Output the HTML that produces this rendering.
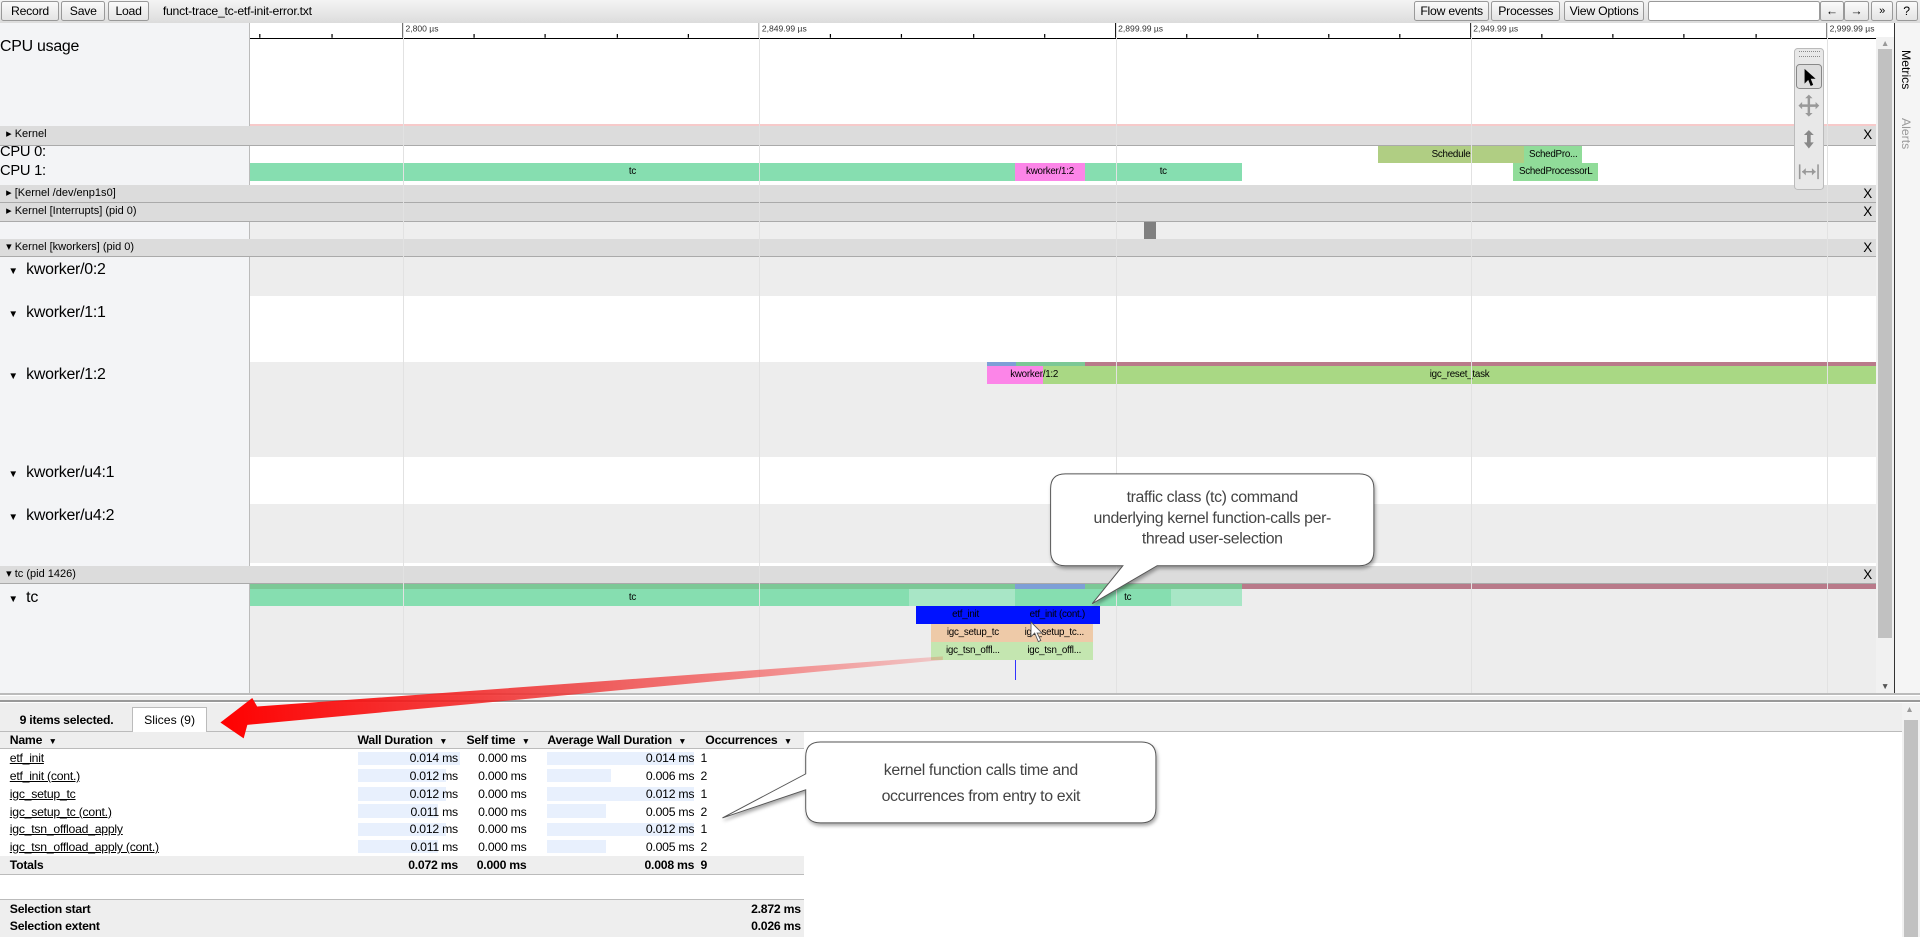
<!DOCTYPE html>
<html><head><meta charset="utf-8"><style>
html,body{margin:0;padding:0;width:1920px;height:937px;overflow:hidden;background:#fff}
#w{zoom:1.22449;width:1568px;height:765px;position:relative;overflow:hidden;font-family:"Liberation Sans",sans-serif;color:#000}
.a{position:absolute}
.btn{position:absolute;top:1px;height:16px;border:1px solid #999;border-radius:2px;background:linear-gradient(#fafafa,#e4e4e4);font-size:10px;letter-spacing:-0.2px;white-space:nowrap;overflow:hidden;line-height:15px;text-align:center;box-sizing:border-box}
.hdr{position:absolute;left:0;width:1532px;background:#dcdcdc;border-bottom:1px solid #aaa;font-size:9px;line-height:14px;box-sizing:border-box}
.hdr span.x{position:absolute;right:3px;top:0;font-size:11px}
.lbl{position:absolute;left:0;width:203px;font-size:13px;letter-spacing:-0.2px}
.bar{position:absolute;font-size:8px;text-align:center;overflow:hidden;white-space:nowrap;line-height:14px;letter-spacing:-0.2px}
.vl{position:absolute;top:19px;width:1px;background:#e2e2e2;height:547px}
td,th{padding:0;font-size:10px;height:14.5px;white-space:nowrap;letter-spacing:-0.2px}
</style></head><body><div id="w">
<div class="a" style="left:0;top:0;width:1568px;height:19px;background:linear-gradient(#f4f4f4,#dcdcdc)"></div>
<div class="btn" style="left:1px;width:47px">Record</div>
<div class="btn" style="left:50px;width:36px">Save</div>
<div class="btn" style="left:88px;width:34px">Load</div>
<div class="a" style="left:133px;top:3px;font-size:10px;letter-spacing:-0.2px">funct-trace_tc-etf-init-error.txt</div>
<div class="btn" style="left:1155px;width:61px">Flow events</div>
<div class="btn" style="left:1218px;width:56px">Processes</div>
<div class="btn" style="left:1277px;width:66px">View Options</div>
<div class="btn" style="left:1346px;width:140px;background:#fff"></div>
<div class="btn" style="left:1486px;width:20px">&larr;</div>
<div class="btn" style="left:1506px;width:20px">&rarr;</div>
<div class="btn" style="left:1528px;width:18px;font-size:9px">»</div>
<div class="btn" style="left:1548px;width:18px">?</div>
<div class="a" style="left:0;top:19px;width:203px;height:548px;background:#f3f4f6;border-right:1px solid #bbb"></div>
<div class="a" style="left:204px;top:19px;width:1328px;height:12px;background:#fff;border-bottom:1px solid #000"></div>
<svg class="a" style="left:204px;top:19px" width="1328" height="12">
<g stroke="#000" stroke-width="1">
<path d="M125 0V12M416 0V12M707 0V12M997 0V12M1288 0V12"/>
<path d="M8 9V12M67 9V12M183 9V12M241 9V12M300 9V12M358 9V12M474 9V12M532 9V12M591 9V12M649 9V12M765 9V12M823 9V12M881 9V12M939 9V12M1055 9V12M1113 9V12M1171 9V12M1230 9V12"/></g>
<g font-size="7" fill="#333" font-family="Liberation Sans"><text x="127" y="7">2,800 µs</text><text x="418" y="7">2,849.99 µs</text><text x="709" y="7">2,899.99 µs</text><text x="999" y="7">2,949.99 µs</text><text x="1290" y="7">2,999.99 µs</text></g></svg>
<div class="lbl" style="top:31px;font-size:13px">CPU usage</div>
<div class="a" style="left:204px;top:101px;width:1328px;height:2px;background:#f7caca"></div>
<div class="hdr" style="top:103px;height:16px">&nbsp;&nbsp;▸ Kernel<span class="x">X</span></div>
<div class="lbl" style="top:118px;font-size:12px">CPU 0:</div>
<div class="lbl" style="top:133px;font-size:12px">CPU 1:</div>
<div class="bar" style="left:204px;top:133px;width:625px;height:15px;background:#86deb0">tc</div>
<div class="bar" style="left:829px;top:133px;width:57px;height:15px;background:#fc85e8">kworker/1:2</div>
<div class="bar" style="left:886px;top:133px;width:128px;height:15px;background:#86deb0">tc</div>
<div class="bar" style="left:1125px;top:119px;width:120px;height:14px;background:#b0ce83">Schedule</div>
<div class="bar" style="left:1245px;top:119px;width:47px;height:14px;background:#90dc99">SchedPro...</div>
<div class="bar" style="left:1236px;top:133px;width:69px;height:15px;background:#90dc99">SchedProcessorL</div>
<div class="hdr" style="top:151px;height:15px">&nbsp;&nbsp;▸ [Kernel /dev/enp1s0]<span class="x">X</span></div>
<div class="hdr" style="top:166px;height:15px">&nbsp;&nbsp;▸ Kernel [Interrupts] (pid 0)<span class="x">X</span></div>
<div class="a" style="left:204px;top:181px;width:1328px;height:14px;background:#eee"></div>
<div class="a" style="left:934px;top:181px;width:10px;height:14px;background:#808080"></div>
<div class="hdr" style="top:195px;height:15px">&nbsp;&nbsp;▾ Kernel [kworkers] (pid 0)<span class="x">X</span></div>
<div class="a" style="left:204px;top:210px;width:1328px;height:32px;background:#ededed"></div>
<div class="a" style="left:204px;top:296px;width:1328px;height:77px;background:#ededed"></div>
<div class="a" style="left:204px;top:412px;width:1328px;height:48px;background:#ededed"></div>
<div class="lbl" style="top:213px">&nbsp;&nbsp;<span style="font-size:8px">▼</span>&nbsp;&nbsp;kworker/0:2</div>
<div class="lbl" style="top:248px">&nbsp;&nbsp;<span style="font-size:8px">▼</span>&nbsp;&nbsp;kworker/1:1</div>
<div class="lbl" style="top:299px">&nbsp;&nbsp;<span style="font-size:8px">▼</span>&nbsp;&nbsp;kworker/1:2</div>
<div class="lbl" style="top:379px">&nbsp;&nbsp;<span style="font-size:8px">▼</span>&nbsp;&nbsp;kworker/u4:1</div>
<div class="lbl" style="top:414px">&nbsp;&nbsp;<span style="font-size:8px">▼</span>&nbsp;&nbsp;kworker/u4:2</div>
<div class="a" style="left:806px;top:296px;width:24px;height:3px;background:#7e9fd6"></div>
<div class="a" style="left:830px;top:296px;width:56px;height:3px;background:#7cc896"></div>
<div class="a" style="left:886px;top:296px;width:646px;height:3px;background:#b97a8a"></div>
<div class="a" style="left:806px;top:299px;width:46px;height:15px;background:#fc85e8"></div>
<div class="bar" style="left:852px;top:299px;width:680px;height:15px;background:#a9d884">igc_reset_task</div>
<div class="a" style="left:825px;top:299px;font-size:8px;line-height:14px;letter-spacing:-0.2px">kworker/1:2</div>
<div class="hdr" style="top:462px;height:15px">&nbsp;&nbsp;▾ tc (pid 1426)<span class="x">X</span></div>
<div class="a" style="left:204px;top:477px;width:1328px;height:89px;background:#ededed"></div>
<div class="lbl" style="top:481px">&nbsp;&nbsp;<span style="font-size:8px">▼</span>&nbsp;&nbsp;tc</div>
<div class="a" style="left:204px;top:477px;width:625px;height:4px;background:#7cc896"></div>
<div class="a" style="left:829px;top:477px;width:57px;height:4px;background:#7e9fd6"></div>
<div class="a" style="left:886px;top:477px;width:128px;height:4px;background:#7cc896"></div>
<div class="a" style="left:1014px;top:477px;width:518px;height:4px;background:#b97a8a"></div>
<div class="a" style="left:204px;top:481px;width:810px;height:14px;background:#86deb0"></div>
<div class="a" style="left:742px;top:481px;width:87px;height:14px;background:#a8e6c6"></div>
<div class="a" style="left:956px;top:481px;width:58px;height:14px;background:#a8e6c6"></div>
<div class="bar" style="left:204px;top:481px;width:625px;height:14px">tc</div>
<div class="bar" style="left:886px;top:481px;width:70px;height:14px">tc</div>
<div class="bar" style="left:748px;top:495px;width:81px;height:15px;background:#0012ff">etf_init</div>
<div class="bar" style="left:829px;top:495px;width:69px;height:15px;background:#0012ff">etf_init (cont.)</div>
<div class="bar" style="left:760px;top:510px;width:69px;height:14px;background:#eecaa8">igc_setup_tc</div>
<div class="bar" style="left:829px;top:510px;width:64px;height:14px;background:#eecaa8">igc_setup_tc...</div>
<div class="bar" style="left:760px;top:524px;width:69px;height:15px;background:#c4e6b0">igc_tsn_offl...</div>
<div class="bar" style="left:829px;top:524px;width:64px;height:15px;background:#c4e6b0">igc_tsn_offl...</div>
<div class="a" style="left:829px;top:539px;width:1px;height:16px;background:#33f"></div>
<div class="vl" style="left:329px"></div><div class="vl" style="left:620px"></div><div class="vl" style="left:911px"></div><div class="vl" style="left:1201px"></div><div class="vl" style="left:1492px"></div>
<div class="a" style="left:1532px;top:30px;width:15px;height:537px;background:#f1f1f1"></div>
<div class="a" style="left:1534px;top:40px;width:11px;height:481px;background:#c1c1c1"></div>
<div class="a" style="left:1536px;top:31px;font-size:7px;color:#999">▲</div>
<div class="a" style="left:1536px;top:556px;font-size:7px;color:#555">▼</div>
<div class="a" style="left:1547px;top:19px;width:21px;height:548px;background:#f5f5f5;border-left:1px solid #333"></div>
<div class="a" style="left:1551px;top:41px;writing-mode:vertical-rl;font-size:10px">Metrics</div>
<div class="a" style="left:1551px;top:96px;writing-mode:vertical-rl;font-size:10px;color:#999">Alerts</div>
<div class="a" style="left:1465px;top:39px;width:25px;height:116px;background:#e8e8e8;border:1px solid #bbb;border-radius:3px;box-sizing:border-box"></div>
<div class="a" style="left:1469px;top:42px;width:17px;height:3px;border-top:1px dotted #888;border-bottom:1px dotted #888"></div>
<div class="a" style="left:1467px;top:52px;width:21px;height:21px;border:1px solid #888;border-radius:3px;background:#ddd;box-sizing:border-box"></div>
<svg class="a" style="left:1467px;top:52px" width="21" height="100"><path d="M7 4L7 16L10 13L12 18L14 17L12 12L16 12Z" fill="#000"/>
<path d="M10.5 27v14M3.5 34h14" stroke="#999" stroke-width="2"/><path d="M10.5 25l3 3h-6zM10.5 43l3-3h-6zM2 34l3-3v6zM19 34l-3-3v6z" fill="#999"/>
<path d="M10.5 54l4 4h-2.5v6h2.5l-4 5-4-5h2.5v-6h-2.5z" fill="#888"/>
<path d="M3 82v12M18 82v12M5 88h11" stroke="#999" stroke-width="1.3"/><path d="M5 88l3-3v6zM16 88l-3-3v6z" fill="#999"/></svg>
<div class="a" style="left:0;top:566px;width:1568px;height:2px;background:#bbb"></div>
<div class="a" style="left:0;top:568px;width:1568px;height:4px;background:#eee;border-bottom:2px solid #999"></div>
<div class="a" style="left:0;top:574px;width:1568px;height:23px;background:#eee;border-bottom:1px solid #bbb"></div>
<div class="a" style="left:16px;top:582px;font-size:10px;font-weight:bold;letter-spacing:-0.2px">9 items selected.</div>
<div class="a" style="left:108px;top:577px;width:61px;height:21px;background:#fff;border:1px solid #bbb;border-bottom:none;font-size:10px;text-align:center;line-height:20px;box-sizing:border-box">Slices (9)</div>
<div class="a" style="left:1553px;top:574px;width:15px;height:191px;background:#f1f1f1"></div>
<div class="a" style="left:1555px;top:588px;width:11px;height:177px;background:#c1c1c1"></div>
<div class="a" style="left:1556px;top:575px;font-size:7px;color:#999">▲</div>
<div class="a" style="left:0;top:598px;width:657px;height:13px;background:#eee;border-bottom:1px solid #bbb"></div>
<div class="a" style="left:8px;top:599px;font-size:10px;font-weight:bold;letter-spacing:-0.2px">Name &nbsp;<span style="font-size:7px">▼</span></div>
<div class="a" style="left:292px;top:599px;font-size:10px;font-weight:bold;letter-spacing:-0.2px">Wall Duration &nbsp;<span style="font-size:7px">▼</span></div>
<div class="a" style="left:381px;top:599px;font-size:10px;font-weight:bold;letter-spacing:-0.2px">Self time &nbsp;<span style="font-size:7px">▼</span></div>
<div class="a" style="left:447px;top:599px;font-size:10px;font-weight:bold;letter-spacing:-0.2px">Average Wall Duration &nbsp;<span style="font-size:7px">▼</span></div>
<div class="a" style="left:576px;top:599px;font-size:10px;font-weight:bold;letter-spacing:-0.2px">Occurrences &nbsp;<span style="font-size:7px">▼</span></div>
<div class="a" style="left:0;top:612px;width:657px;height:87px">
<div class="a" style="left:292px;top:2px;width:84px;height:11px;background:#e8f0fd"></div>
<div class="a" style="left:292px;top:16px;width:72px;height:11px;background:#e8f0fd"></div>
<div class="a" style="left:292px;top:31px;width:72px;height:11px;background:#e8f0fd"></div>
<div class="a" style="left:292px;top:45px;width:66px;height:11px;background:#e8f0fd"></div>
<div class="a" style="left:292px;top:60px;width:72px;height:11px;background:#e8f0fd"></div>
<div class="a" style="left:292px;top:74px;width:66px;height:11px;background:#e8f0fd"></div>
<div class="a" style="left:447px;top:2px;width:120px;height:11px;background:#e8f0fd"></div>
<div class="a" style="left:447px;top:16px;width:52px;height:11px;background:#e8f0fd"></div>
<div class="a" style="left:447px;top:31px;width:120px;height:11px;background:#e8f0fd"></div>
<div class="a" style="left:447px;top:45px;width:48px;height:11px;background:#e8f0fd"></div>
<div class="a" style="left:447px;top:60px;width:120px;height:11px;background:#e8f0fd"></div>
<div class="a" style="left:447px;top:74px;width:48px;height:11px;background:#e8f0fd"></div>
</div>
<table class="a" style="left:0;top:612px;border-collapse:collapse;width:657px" cellspacing="0">
<colgroup><col style="width:290px"><col style="width:84px"><col style="width:56px"><col style="width:137px"><col></colgroup>
<tr><td style="padding-left:8px"><u>etf_init</u></td><td align="right">0.014 ms</td><td align="right">0.000 ms</td><td align="right">0.014 ms</td><td>&nbsp;&nbsp;1</td></tr>
<tr><td style="padding-left:8px"><u>etf_init (cont.)</u></td><td align="right">0.012 ms</td><td align="right">0.000 ms</td><td align="right">0.006 ms</td><td>&nbsp;&nbsp;2</td></tr>
<tr><td style="padding-left:8px"><u>igc_setup_tc</u></td><td align="right">0.012 ms</td><td align="right">0.000 ms</td><td align="right">0.012 ms</td><td>&nbsp;&nbsp;1</td></tr>
<tr><td style="padding-left:8px"><u>igc_setup_tc (cont.)</u></td><td align="right">0.011 ms</td><td align="right">0.000 ms</td><td align="right">0.005 ms</td><td>&nbsp;&nbsp;2</td></tr>
<tr><td style="padding-left:8px"><u>igc_tsn_offload_apply</u></td><td align="right">0.012 ms</td><td align="right">0.000 ms</td><td align="right">0.012 ms</td><td>&nbsp;&nbsp;1</td></tr>
<tr><td style="padding-left:8px"><u>igc_tsn_offload_apply (cont.)</u></td><td align="right">0.011 ms</td><td align="right">0.000 ms</td><td align="right">0.005 ms</td><td>&nbsp;&nbsp;2</td></tr>
<tr style="background:#eee;border-bottom:1px solid #bbb"><td style="padding-left:8px;font-weight:bold">Totals</td><td align="right" style="font-weight:bold">0.072 ms</td><td align="right" style="font-weight:bold">0.000 ms</td><td align="right" style="font-weight:bold">0.008 ms</td><td style="font-weight:bold">&nbsp;&nbsp;9</td></tr>
</table>
<div class="a" style="left:0;top:734px;width:657px;height:30px;background:#eee;border-top:1px solid #bbb;border-bottom:1px solid #bbb;font-size:10px;font-weight:bold;letter-spacing:-0.2px">
<div class="a" style="left:8px;top:2px">Selection start</div><div class="a" style="right:3px;top:2px">2.872 ms</div>
<div class="a" style="left:8px;top:16px">Selection extent</div><div class="a" style="right:3px;top:16px">0.026 ms</div></div>
<svg class="a" style="left:0;top:0" width="1568" height="765">
<defs><linearGradient id="g" x1="770" y1="537" x2="180" y2="590" gradientUnits="userSpaceOnUse"><stop offset="0" stop-color="#f00" stop-opacity="0.15"/><stop offset="0.5" stop-color="#e33" stop-opacity="0.8"/><stop offset="1" stop-color="#f00"/></linearGradient>
<filter id="s"><feDropShadow dx="1" dy="2" stdDeviation="1.5" flood-opacity="0.35"/></filter></defs>
<path d="M770 536L210 577L206 570L180 590L199 603L202 592L770 539Z" fill="url(#g)"/>
<path d="M870 387H1110Q1122 387 1122 399V450Q1122 462 1110 462H945L892 493L917 462H870Q858 462 858 450V399Q858 387 870 387Z" fill="#fff" stroke="#555" stroke-width="0.8" filter="url(#s)"/>
<path d="M670 606H932Q944 606 944 618V660Q944 672 932 672H670Q658 672 658 660V645L590 668L658 632V618Q658 606 670 606Z" fill="#fff" stroke="#555" stroke-width="0.8" filter="url(#s)"/>
<g font-family="Liberation Sans" font-size="13" fill="#444" text-anchor="middle" letter-spacing="-0.3">
<text x="990" y="410">traffic class (tc) command</text><text x="990" y="427">underlying kernel function-calls per-</text><text x="990" y="444">thread user-selection</text>
<text x="801" y="633">kernel function calls time and</text><text x="801" y="654">occurrences from entry to exit</text></g>
<path d="M842 508l0 12 3-3 3 7 2-1-3-6 4 0z" fill="#fff" stroke="#555" stroke-width="0.7"/>
</svg>
</div></body></html>
